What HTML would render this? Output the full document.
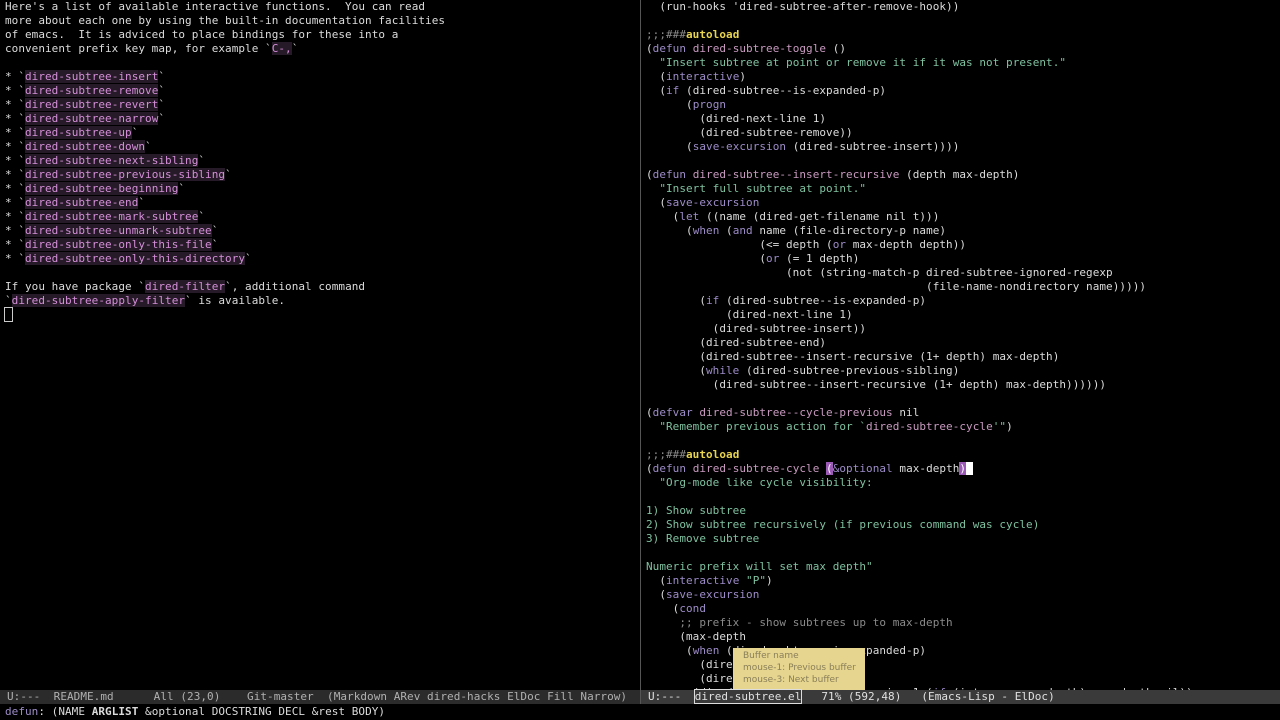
<!DOCTYPE html>
<html><head><meta charset="utf-8"><style>
html,body{margin:0;padding:0;background:#000;width:1280px;height:720px;overflow:hidden}
pre{margin:0;font-family:"DejaVu Sans Mono","Liberation Mono",monospace;font-size:11px;letter-spacing:0.045px;line-height:14px;color:#dcdcdc;position:absolute;white-space:pre}
.k{color:#9d8cc8}.f{color:#c99ac0}.s{color:#7fc1a0}.c{color:#8a8a8a}.a{color:#e8d44d;font-weight:bold}.v{color:#c99ac0}
.m{color:#d48fd8;background:#261a28}
.cur{outline:1px solid #ccc}
.ml{position:absolute;top:690px;height:14px;background:#333;}
.tip{position:absolute;left:733px;top:648px;width:132px;height:42px;background:#e6d58e;font-family:"DejaVu Sans","Liberation Sans",sans-serif;font-size:9px;line-height:12px;color:#8a7f5a;padding:2px 0 0 10px;box-sizing:border-box}
</style></head><body>
<pre style="left:5px;top:0px">Here's a list of available interactive functions.  You can read
more about each one by using the built-in documentation facilities
of emacs.  It is adviced to place bindings for these into a
convenient prefix key map, for example `<span class="m">C-,</span>`

* `<span class="m">dired-subtree-insert</span>`
* `<span class="m">dired-subtree-remove</span>`
* `<span class="m">dired-subtree-revert</span>`
* `<span class="m">dired-subtree-narrow</span>`
* `<span class="m">dired-subtree-up</span>`
* `<span class="m">dired-subtree-down</span>`
* `<span class="m">dired-subtree-next-sibling</span>`
* `<span class="m">dired-subtree-previous-sibling</span>`
* `<span class="m">dired-subtree-beginning</span>`
* `<span class="m">dired-subtree-end</span>`
* `<span class="m">dired-subtree-mark-subtree</span>`
* `<span class="m">dired-subtree-unmark-subtree</span>`
* `<span class="m">dired-subtree-only-this-file</span>`
* `<span class="m">dired-subtree-only-this-directory</span>`

If you have package `<span class="m">dired-filter</span>`, additional command
`<span class="m">dired-subtree-apply-filter</span>` is available.
<span class="cur"> </span></pre>
<div style="position:absolute;left:640px;top:0;width:1px;height:704px;background:#555"></div>
<pre style="left:646px;top:0px;height:690px;overflow:hidden">  (run-hooks 'dired-subtree-after-remove-hook))

<span class="c">;;;###</span><span class="a">autoload</span>
(<span class="k">defun</span> <span class="f">dired-subtree-toggle</span> ()
  <span class="s">"Insert subtree at point or remove it if it was not present."</span>
  (<span class="k">interactive</span>)
  (<span class="k">if</span> (dired-subtree--is-expanded-p)
      (<span class="k">progn</span>
        (dired-next-line 1)
        (dired-subtree-remove))
      (<span class="k">save-excursion</span> (dired-subtree-insert))))

(<span class="k">defun</span> <span class="f">dired-subtree--insert-recursive</span> (depth max-depth)
  <span class="s">"Insert full subtree at point."</span>
  (<span class="k">save-excursion</span>
    (<span class="k">let</span> ((name (dired-get-filename nil t)))
      (<span class="k">when</span> (<span class="k">and</span> name (file-directory-p name)
                 (&lt;= depth (<span class="k">or</span> max-depth depth))
                 (<span class="k">or</span> (= 1 depth)
                     (not (string-match-p dired-subtree-ignored-regexp
                                          (file-name-nondirectory name)))))
        (<span class="k">if</span> (dired-subtree--is-expanded-p)
            (dired-next-line 1)
          (dired-subtree-insert))
        (dired-subtree-end)
        (dired-subtree--insert-recursive (1+ depth) max-depth)
        (<span class="k">while</span> (dired-subtree-previous-sibling)
          (dired-subtree--insert-recursive (1+ depth) max-depth))))))

(<span class="k">defvar</span> <span class="v">dired-subtree--cycle-previous</span> nil
  <span class="s">"Remember previous action for `</span><span class="v">dired-subtree-cycle</span><span class="s">'"</span>)

<span class="c">;;;###</span><span class="a">autoload</span>
(<span class="k">defun</span> <span class="f">dired-subtree-cycle</span> <span style="background:#9b59b6;color:#fff">(</span><span class="k">&amp;optional</span> max-depth<span style="background:#9b59b6;color:#fff">)</span><span style="background:#fff"> </span>
  <span class="s">"Org-mode like cycle visibility:

1) Show subtree
2) Show subtree recursively (if previous command was cycle)
3) Remove subtree

Numeric prefix will set max depth"</span>
  (<span class="k">interactive</span> <span class="s">"P"</span>)
  (<span class="k">save-excursion</span>
    (<span class="k">cond</span>
     <span class="c">;; prefix - show subtrees up to max-depth</span>
     (max-depth
      (<span class="k">when</span> (dired-subtree--is-expanded-p)
        (dired-next-line 1)
        (dired-subtree-remove))
       (dired-subtree--insert-recursive 1 (<span class="k">if</span> (integerp max-depth) max-depth nil))</pre>
<div class="tip">Buffer name<br>mouse-1: Previous buffer<br>mouse-3: Next buffer</div>
<div class="ml" style="left:0;width:640px;background:#2b2b2b"></div>
<div class="ml" style="left:641px;width:639px;background:#3a3a3a"></div>
<pre style="left:7px;top:690px;color:#b0b0b0">U:---  README.md      All (23,0)    Git-master  (Markdown ARev dired-hacks ElDoc Fill Narrow)</pre>
<pre style="left:648px;top:690px;color:#e0e0e0">U:---  <span style="outline:1px solid #ddd">dired-subtree.el</span>   71% (592,48)   (Emacs-Lisp - ElDoc)</pre>
<pre style="left:5px;top:705px"><span class="k">defun</span>: (NAME <b>ARGLIST</b> &amp;optional DOCSTRING DECL &amp;rest BODY)</pre>
</body></html>
